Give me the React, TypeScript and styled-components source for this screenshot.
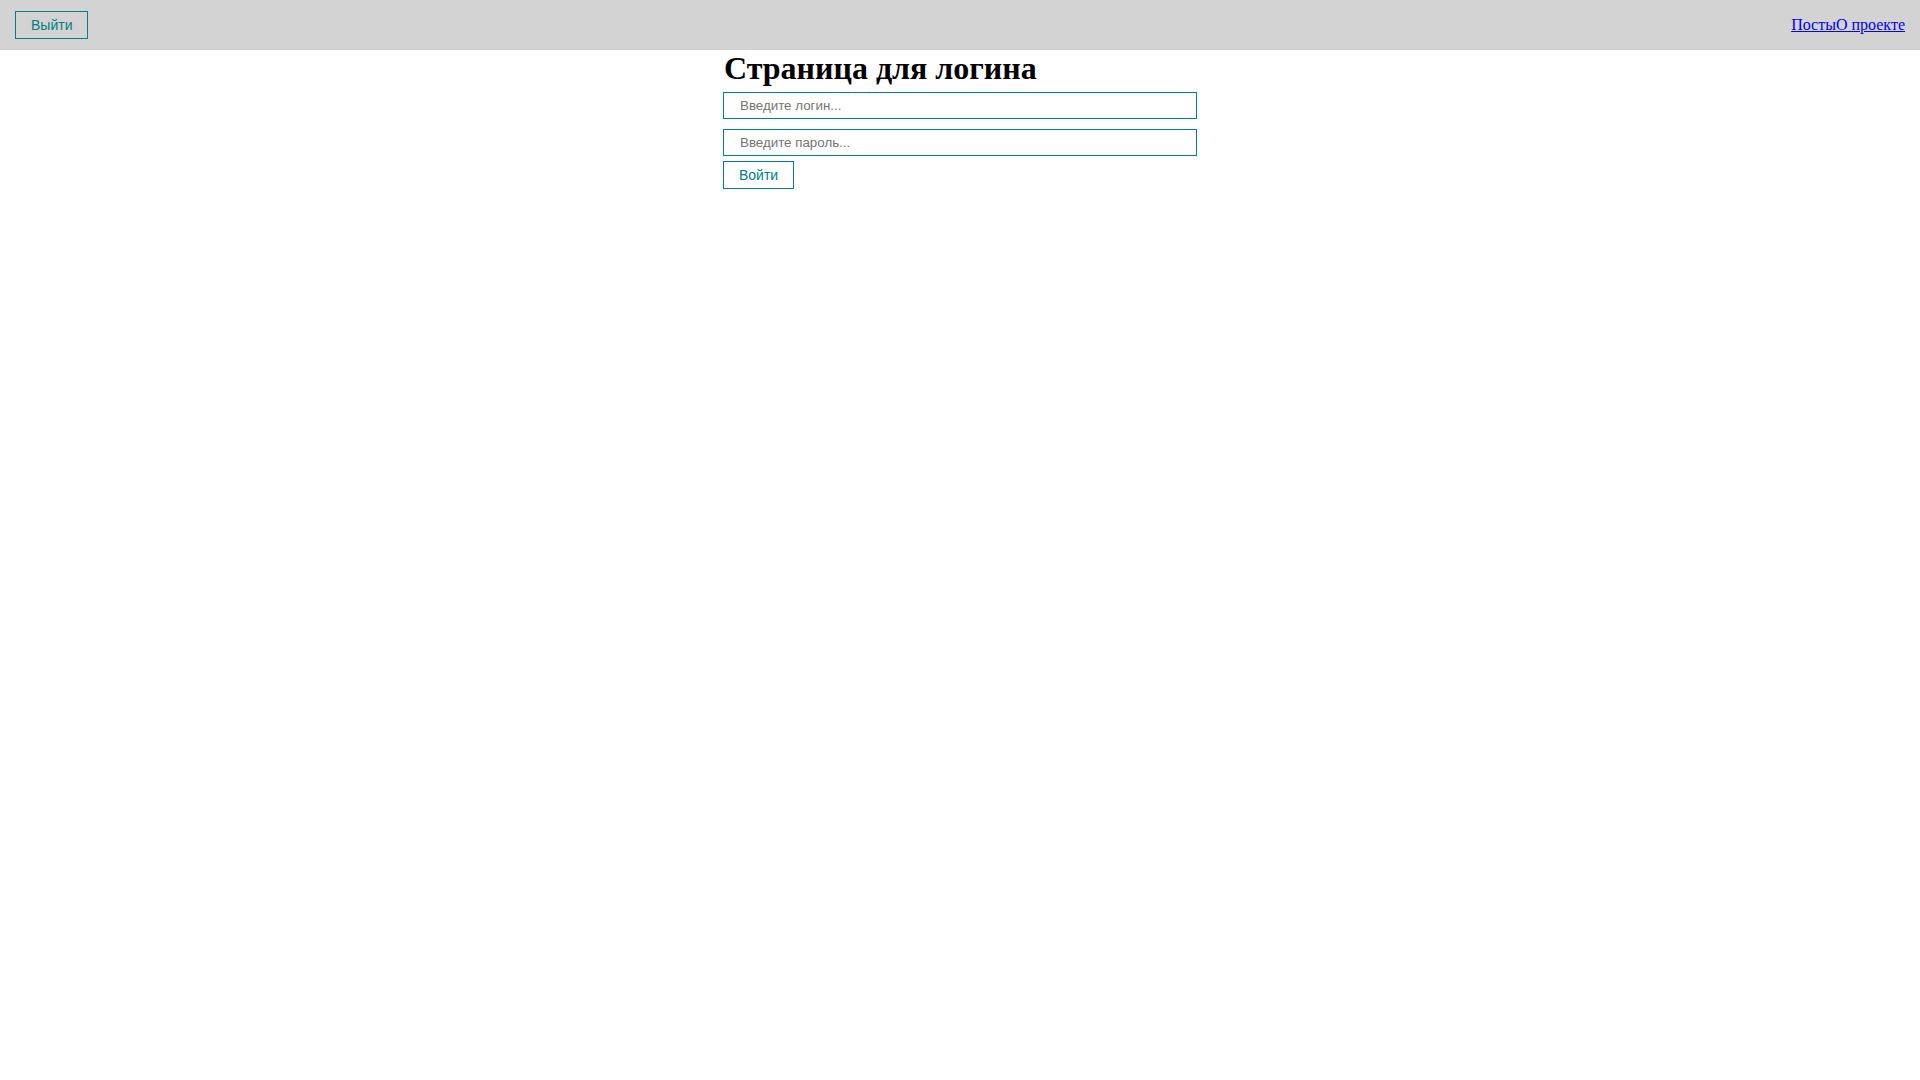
import React from "react";
import styled, { createGlobalStyle } from "styled-components";

const GlobalStyle = createGlobalStyle`
  html, body {
    margin: 0;
    padding: 0;
    background: #ffffff;
    font-family: "Liberation Serif", "Times New Roman", serif;
  }
`;

const Navbar = styled.nav`
  height: 50px;
  box-sizing: border-box;
  padding: 0 15px;
  background: lightgray;
  display: flex;
  align-items: center;
  justify-content: space-between;
`;

const OutlineButton = styled.button`
  font-family: "Liberation Sans", Arial, sans-serif;
  font-size: 14px;
  line-height: normal;
  color: teal;
  background: transparent;
  border: 1px solid teal;
  padding: 5px 15px;
  margin: 0;
  cursor: pointer;
`;

const Links = styled.div`
  display: flex;
  font-size: 16px;
`;

const NavLink = styled.a`
  color: #0000ee;
  text-decoration: underline;
`;

const Page = styled.main`
  width: 474px;
  margin: 0 auto;
  display: flex;
  flex-direction: column;
  align-items: flex-start;
`;

const Title = styled.h1`
  margin: 0;
  padding-left: 1px;
  font-size: 32px;
  font-weight: bold;
  line-height: normal;
  color: #000;
`;

const Input = styled.input`
  width: 100%;
  box-sizing: border-box;
  margin: 5px 0;
  padding: 5px 15px 5px 16px;
  font-family: "Liberation Sans", Arial, sans-serif;
  font-size: 13.333px;
  border: 1px solid teal;
  outline: none;
  background: #fff;
  &::placeholder {
    color: #757575;
  }
`;

export default function App() {
  return (
    <>
      <GlobalStyle />
      <Navbar>
        <OutlineButton>Выйти</OutlineButton>
        <Links>
          <NavLink href="#">Посты</NavLink>
          <NavLink href="#">О проекте</NavLink>
        </Links>
      </Navbar>
      <Page>
        <Title>Страница для логина</Title>
        <Input type="text" placeholder="Введите логин..." />
        <Input type="password" placeholder="Введите пароль..." />
        <OutlineButton>Войти</OutlineButton>
      </Page>
    </>
  );
}
